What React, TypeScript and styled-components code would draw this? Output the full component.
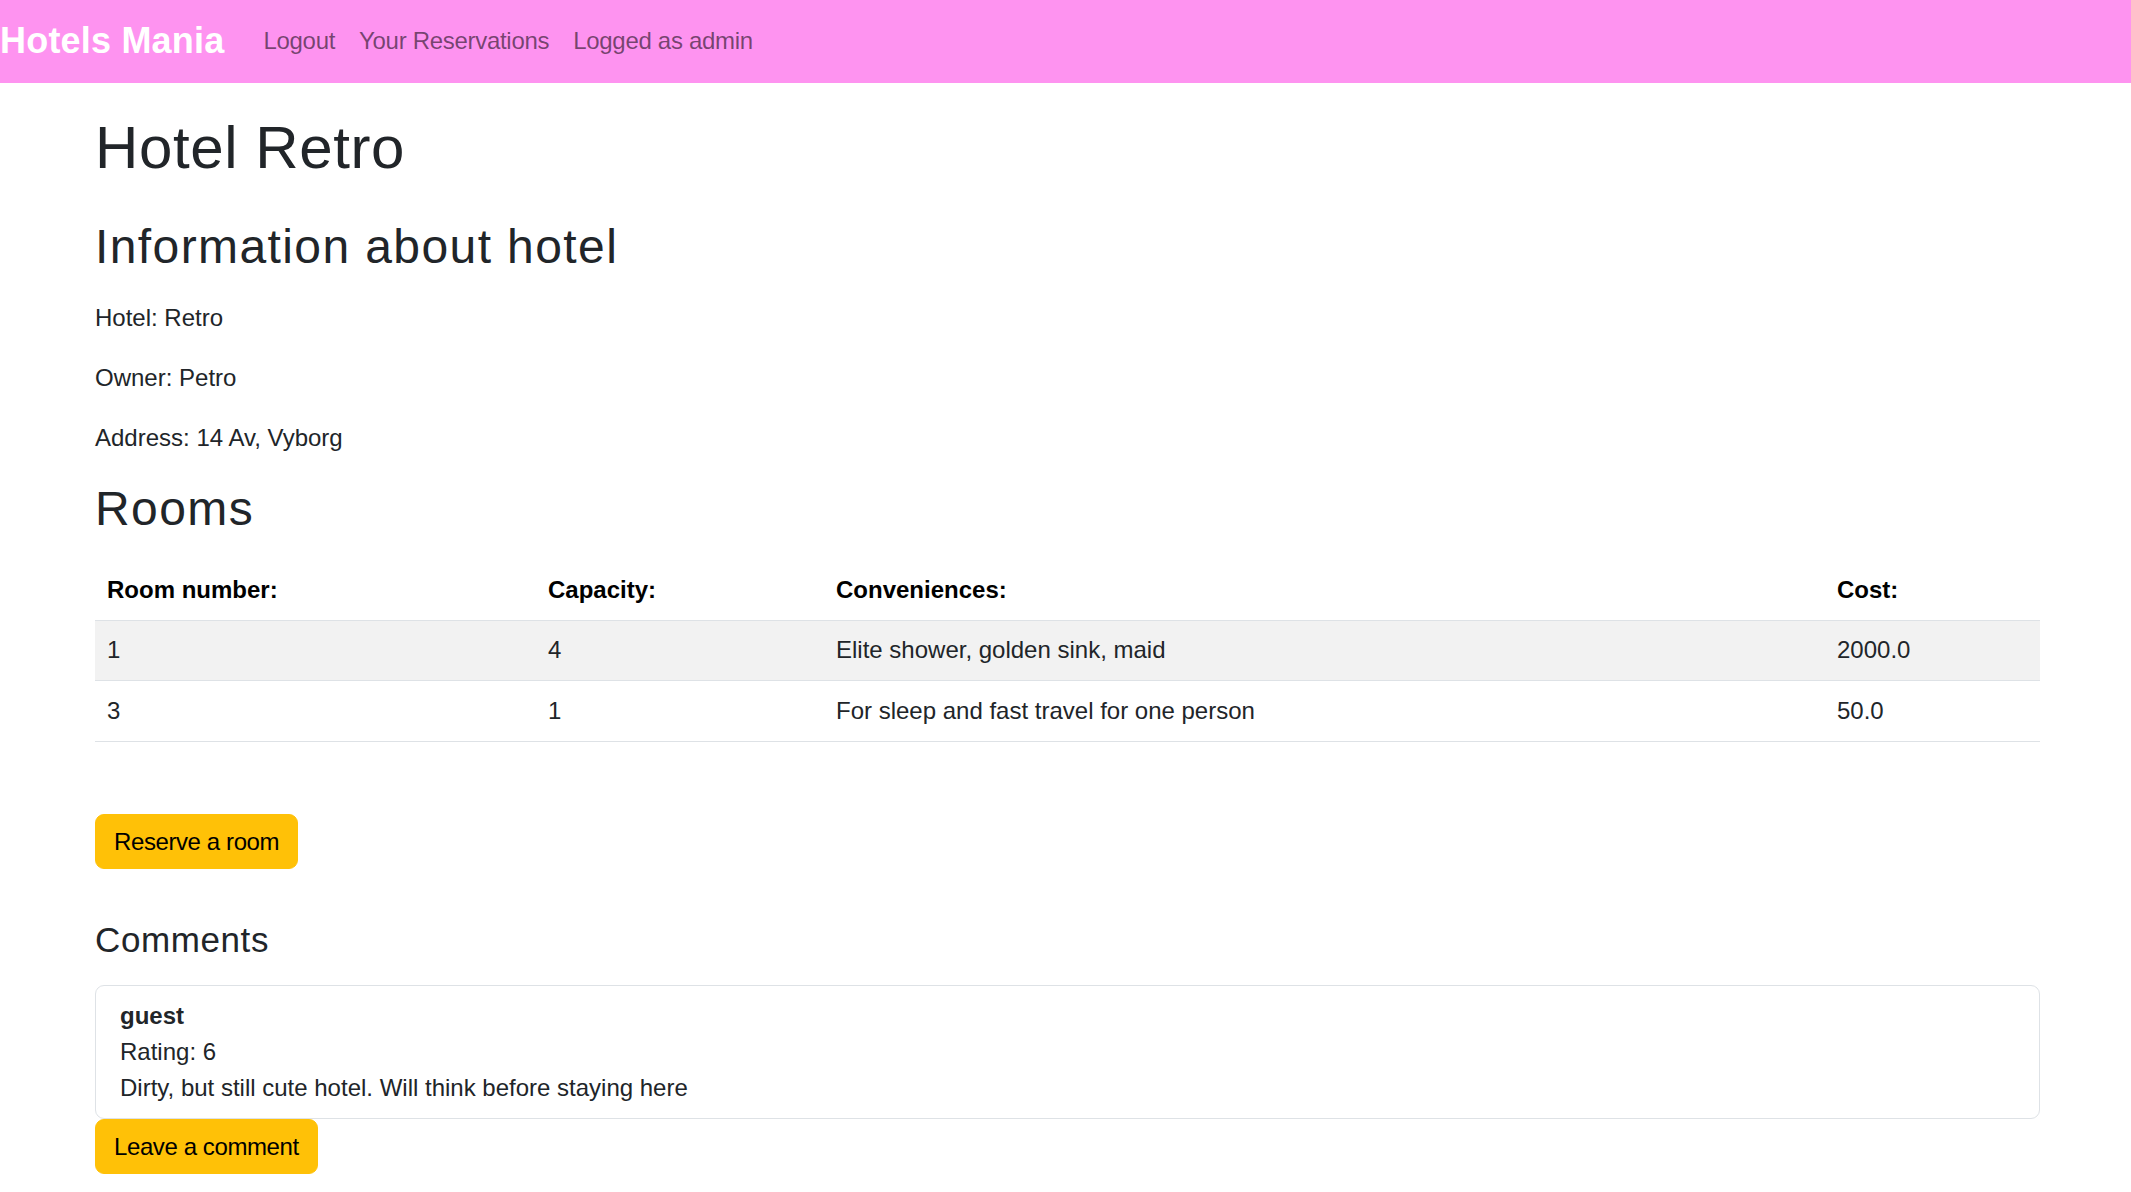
import styled, { createGlobalStyle } from "styled-components";

interface IRoom {
  number: number;
  capacity: number;
  conveniences: string;
  cost: string;
}

interface IComment {
  author: string;
  rating: number;
  text: string;
}

const rooms: IRoom[] = [
  { number: 1, capacity: 4, conveniences: "Elite shower, golden sink, maid", cost: "2000.0" },
  { number: 3, capacity: 1, conveniences: "For sleep and fast travel for one person", cost: "50.0" },
];

const comments: IComment[] = [
  { author: "guest", rating: 6, text: "Dirty, but still cute hotel. Will think before staying here" },
];

const GlobalStyle = createGlobalStyle`
  * {
    box-sizing: border-box;
  }
  body {
    margin: 0;
    background: #fff;
    color: #212529;
    font-family: "Liberation Sans", Arial, sans-serif;
    font-size: 24px;
    line-height: 1.5;
  }
`;

const Navbar = styled.nav`
  display: flex;
  align-items: center;
  height: 83px;
  padding-bottom: 2px;
  background-color: #fe93f0;
`;

const Brand = styled.a`
  margin-right: 27px;
  font-size: 36px;
  font-weight: 700;
  line-height: 1.5;
  letter-spacing: 0.2px;
  color: #fff;
  text-decoration: none;
`;

const NavLink = styled.a`
  padding: 0 12px;
  letter-spacing: -0.3px;
  color: rgba(0, 0, 0, 0.55);
  text-decoration: none;
`;

const Main = styled.main`
  width: 1945px;
  margin-left: 95px;
  padding: 29px 0 40px;
`;

const Title = styled.h1`
  margin: 0 0 34px;
  font-size: 60px;
  font-weight: 500;
  line-height: 1.2;
  letter-spacing: 0.6px;
`;

const SectionTitle = styled.h2<{ $bottom?: number }>`
  margin: 0 0 ${(p) => p.$bottom ?? 24}px;
  font-size: 48px;
  font-weight: 500;
  line-height: 1.2;
  letter-spacing: 1.4px;
`;

const Info = styled.p`
  margin: 0 0 24px;
`;

const Table = styled.table`
  width: 100%;
  border-collapse: collapse;
  table-layout: fixed;
  th,
  td {
    padding: 11.75px 12px;
    text-align: left;
    border-bottom: 1px solid #dee2e6;
  }
  th {
    font-weight: 700;
    color: #000;
  }
  tbody tr:nth-child(odd) td {
    background-color: #f2f2f2;
  }
`;

const Button = styled.button<{ $top?: number }>`
  display: inline-block;
  margin-top: ${(p) => p.$top ?? 0}px;
  padding: 9px 18px;
  font: inherit;
  line-height: 35px;
  letter-spacing: -0.4px;
  color: #000;
  background-color: #ffc107;
  border: 1px solid #ffc107;
  border-radius: 9px;
  cursor: pointer;
`;

const CommentsTitle = styled.h4`
  margin: 50px 0 24px;
  font-size: 35px;
  font-weight: 500;
  line-height: 1.2;
  letter-spacing: 0.6px;
`;

const Card = styled.div`
  padding: 12px 24px;
  border: 1px solid #dee2e6;
  border-radius: 9px;
`;

const Author = styled.div`
  font-weight: 700;
`;

function App() {
  return (
    <>
      <GlobalStyle />
      <Navbar>
        <Brand href="#">Hotels Mania</Brand>
        <NavLink href="#">Logout</NavLink>
        <NavLink href="#">Your Reservations</NavLink>
        <NavLink href="#">Logged as admin</NavLink>
      </Navbar>
      <Main>
        <Title>Hotel Retro</Title>
        <SectionTitle>Information about hotel</SectionTitle>
        <Info>Hotel: Retro</Info>
        <Info>Owner: Petro</Info>
        <Info>Address: 14 Av, Vyborg</Info>
        <SectionTitle $bottom={23}>Rooms</SectionTitle>
        <Table>
          <colgroup>
            <col style={{ width: 441 }} />
            <col style={{ width: 288 }} />
            <col style={{ width: 1001 }} />
            <col style={{ width: 215 }} />
          </colgroup>
          <thead>
            <tr>
              <th>Room number:</th>
              <th>Capacity:</th>
              <th>Conveniences:</th>
              <th>Cost:</th>
            </tr>
          </thead>
          <tbody>
            {rooms.map((room) => (
              <tr key={room.number}>
                <td>{room.number}</td>
                <td>{room.capacity}</td>
                <td>{room.conveniences}</td>
                <td>{room.cost}</td>
              </tr>
            ))}
          </tbody>
        </Table>
        <Button $top={72}>Reserve a room</Button>
        <CommentsTitle>Comments</CommentsTitle>
        {comments.map((c, i) => (
          <Card key={i}>
            <Author>{c.author}</Author>
            <div>Rating: {c.rating}</div>
            <div>{c.text}</div>
          </Card>
        ))}
        <Button>Leave a comment</Button>
      </Main>
    </>
  );
}

export default App;
